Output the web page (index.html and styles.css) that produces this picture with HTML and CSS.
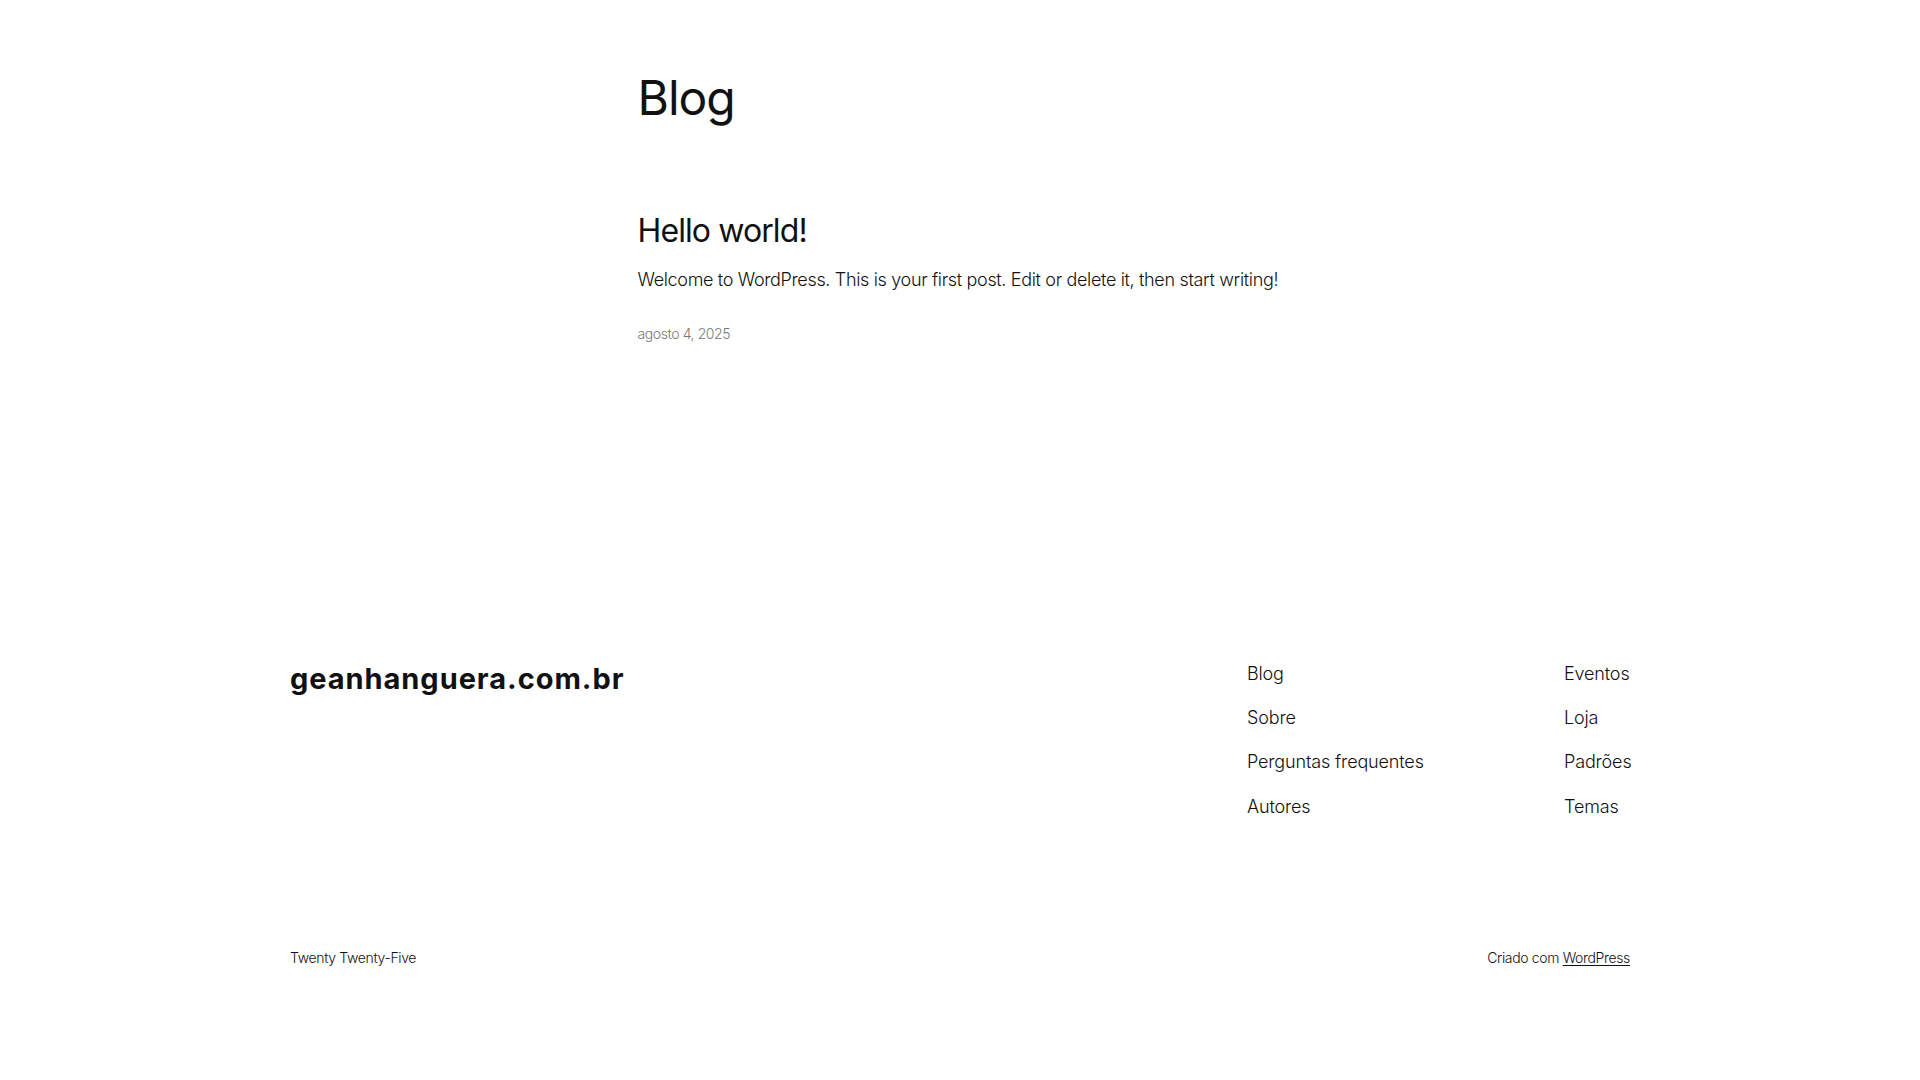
FILE: index.html
```html
<!DOCTYPE html>
<html lang="pt-BR">
<head>
<meta charset="utf-8">
<title>Blog – geanhanguera.com.br</title>
<link rel="stylesheet" href="styles.css">
</head>
<body>
<main class="main">
  <h1 class="page-title">Blog</h1>
  <article class="post">
    <h2 class="post-title"><a href="#">Hello world!</a></h2>
    <p class="post-excerpt">Welcome to WordPress. This is your first post. Edit or delete it, then start writing!</p>
    <div class="post-date">agosto 4, 2025</div>
  </article>
</main>
<footer class="footer">
  <div class="footer-top">
    <div class="site-title"><a href="#">geanhanguera.com.br</a></div>
    <nav class="footer-nav">
      <ul class="nav-col">
        <li><a href="#">Blog</a></li>
        <li><a href="#">Sobre</a></li>
        <li><a href="#">Perguntas frequentes</a></li>
        <li><a href="#">Autores</a></li>
      </ul>
      <ul class="nav-col">
        <li><a href="#">Eventos</a></li>
        <li><a href="#">Loja</a></li>
        <li><a href="#">Padrões</a></li>
        <li><a href="#">Temas</a></li>
      </ul>
    </nav>
  </div>
  <div class="footer-bottom">
    <span class="theme-name">Twenty Twenty-Five</span>
    <span class="credit">Criado com <a href="#" class="credit-link">WordPress</a></span>
  </div>
</footer>
</body>
</html>
```

FILE: styles.css
```css
* { box-sizing: border-box; }

html, body {
  margin: 0;
  padding: 0;
  background: #ffffff;
}

body {
  font-family: Inter, "Noto Sans", "Liberation Sans", sans-serif;
  color: #111111;
  letter-spacing: -0.1px;
}

a {
  color: inherit;
  text-decoration: none;
}

.main {
  width: 645px;
  margin: 0 auto;
  padding-top: 69px;
  min-height: 660px;
}

.page-title {
  margin: 0;
  font-size: 48px;
  font-weight: 400;
  line-height: 1.2;
  letter-spacing: -1px;
}

.post {
  margin-top: 85px;
}

.post-title {
  margin: 0;
  font-size: 32px;
  font-weight: 400;
  line-height: 1.2;
  letter-spacing: -0.9px;
}

.post-excerpt {
  margin: 16px 0 0;
  font-size: 18px;
  font-weight: 300;
  line-height: 1.6;
  letter-spacing: -0.34px;
  white-space: nowrap;
}

.post-date {
  margin-top: 28px;
  font-size: 14px;
  font-weight: 300;
  line-height: 1.6;
  letter-spacing: -0.4px;
  color: #777777;
}

.footer {
  width: 1340px;
  margin: 0 auto;
  padding-bottom: 100px;
}

.footer-top {
  display: flex;
  justify-content: space-between;
  align-items: flex-start;
}

.site-title {
  margin-top: 2px;
  font-size: 29px;
  font-weight: 700;
  line-height: 1.2;
  letter-spacing: 0.95px;
}

.footer-nav {
  display: grid;
  grid-template-columns: 317px 66px;
}

.nav-col {
  list-style: none;
  margin: 0;
  padding: 0;
  display: flex;
  flex-direction: column;
  gap: 15.4px;
  white-space: nowrap;
}

.nav-col li {
  font-size: 18px;
  font-weight: 300;
  line-height: 1.6;
  letter-spacing: -0.15px;
}

.footer-bottom {
  margin-top: 126px;
  display: flex;
  justify-content: space-between;
  font-size: 14px;
  font-weight: 300;
  line-height: 1.6;
  letter-spacing: -0.35px;
}

.credit-link {
  text-decoration: underline;
  text-underline-offset: 2px;
}
```
